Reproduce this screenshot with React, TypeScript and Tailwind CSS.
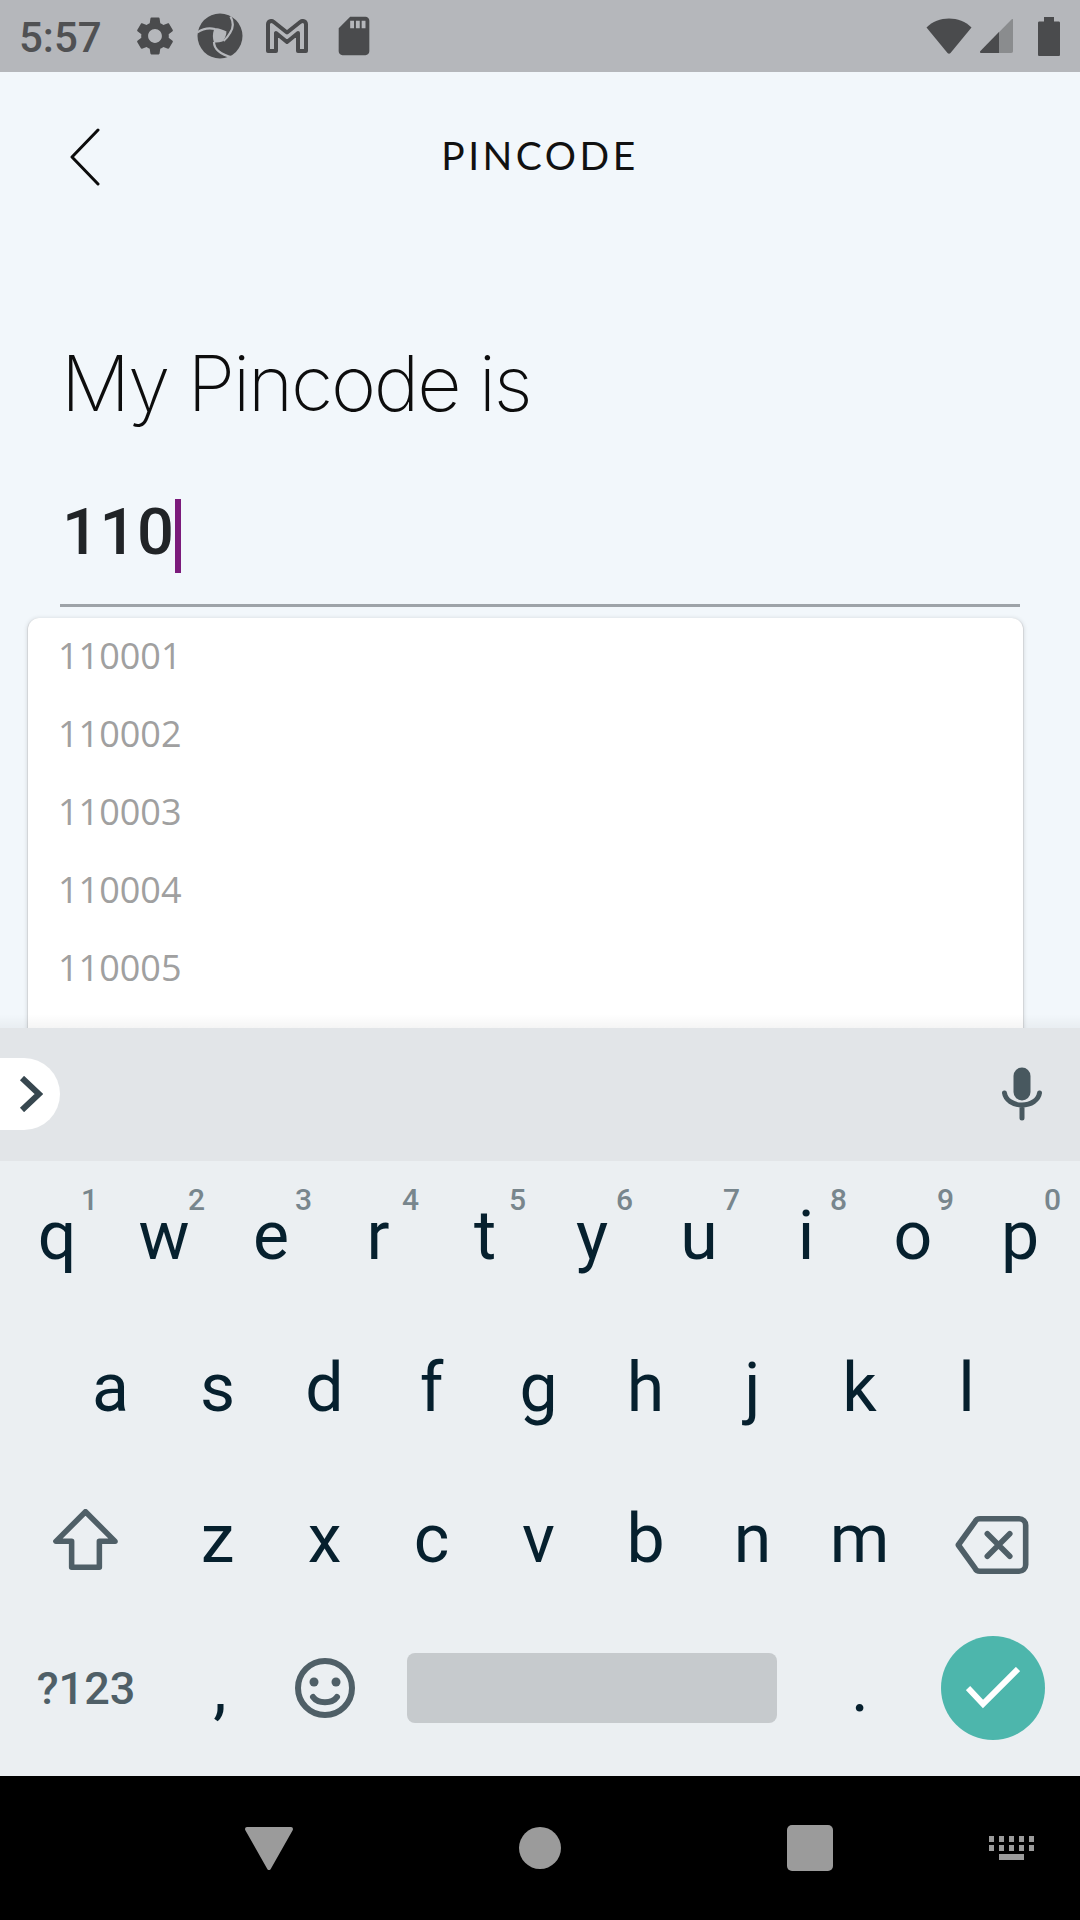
import React from 'react';

const rowOne = [
  ['q', '1'],
  ['w', '2'],
  ['e', '3'],
  ['r', '4'],
  ['t', '5'],
  ['y', '6'],
  ['u', '7'],
  ['i', '8'],
  ['o', '9'],
  ['p', '0'],
];
const rowTwo = ['a', 's', 'd', 'f', 'g', 'h', 'j', 'k', 'l'];
const rowThree = ['z', 'x', 'c', 'v', 'b', 'n', 'm'];
const suggestions = ['110001', '110002', '110003', '110004', '110005'];

const Key: React.FC<{ label: string; hint?: string }> = ({ label, hint }) => (
  <div className="relative flex h-full w-[107px] items-center justify-center text-[68px] leading-none text-[#06202e]">
    <span className="relative left-[-1.5px] top-[-2px]">{label}</span>
    {hint && (
      <span className="absolute right-[14px] top-[23px] text-[30px] font-medium leading-none text-[#78868d]">{hint}</span>
    )}
  </div>
);

const StatusBar = () => (
  <div className="flex h-[72px] items-center bg-[#b5b7bb] pl-[19px] pr-[20px] text-[#4a4b4d]">
    <span className="w-[113px] pt-[4px] font-['Roboto'] text-[42px] font-medium leading-none text-[#505153]">5:57</span>
    <div className="flex items-center">
      <svg viewBox="0 0 24 24" className="h-[46px] w-[46px]" fill="currentColor">
        <path d="M19.14 12.94c.04-.3.06-.61.06-.94 0-.32-.02-.64-.07-.94l2.03-1.58c.18-.14.23-.41.12-.61l-1.92-3.32c-.12-.22-.37-.29-.59-.22l-2.39.96c-.5-.38-1.03-.7-1.62-.94l-.36-2.54c-.04-.24-.24-.41-.48-.41h-3.84c-.24 0-.43.17-.47.41l-.36 2.54c-.59.24-1.13.57-1.62.94l-2.39-.96c-.22-.08-.47 0-.59.22L2.74 8.87c-.12.21-.08.47.12.61l2.03 1.58c-.05.3-.09.63-.09.94s.02.64.07.94l-2.03 1.58c-.18.14-.23.41-.12.61l1.92 3.32c.12.22.37.29.59.22l2.39-.96c.5.38 1.03.7 1.62.94l.36 2.54c.05.24.24.41.48.41h3.84c.24 0 .44-.17.47-.41l.36-2.54c.59-.24 1.13-.56 1.62-.94l2.39.96c.22.08.47 0 .59-.22l1.92-3.32c.12-.22.07-.47-.12-.61l-2.01-1.58zM12 15.6c-1.98 0-3.6-1.62-3.6-3.6s1.62-3.6 3.6-3.6 3.6 1.62 3.6 3.6-1.62 3.6-3.6 3.6z" />
      </svg>
      <svg viewBox="0 0 46 46" className="ml-[19px] h-[46px] w-[46px]">
        <circle cx="23" cy="23" r="22.5" fill="currentColor" />
        <path d="M0 19.500C6 15.500 12 14.500 18 16C22 16.500 26 17.500 29 19.500M33.500 3.500C36.500 9 36.500 15 33 20C31 23.500 29 26 26.500 28M17 29C17 35 22 41 35.500 44.500" fill="none" stroke="#b5b7bb" strokeWidth="2.200" />
        <path d="M17 16.500C21 16.500 26 17.500 29.500 19.500C29 23 27.500 26 25.500 28.500C22.500 29.500 20 29.800 17 29.500C15.500 25 15.500 21 17 16.500Z" fill="#b5b7bb" />
      </svg>
      <svg viewBox="0 0 42 34" className="ml-[23px] h-[34px] w-[42px]" fill="none" stroke="currentColor" strokeWidth="4" strokeLinejoin="round">
        <path d="M2 5.5C2 2.500 5 1 7.500 2.800L21 13.500L34.500 2.800C37 1 40 2.500 40 5.500V32H32V14L21 23L10 14V32H2Z" />
      </svg>
      <svg viewBox="0 0 24 24" className="ml-[23px] h-[46px] w-[46px]" fill="currentColor">
        <path d="M18 2h-8L4.020 8 4 20c0 1.100.9 2 2 2h12c1.100 0 2-.9 2-2V4c0-1.100-.9-2-2-2zm-6 6h-2V4h2v4zm3 0h-2V4h2v4zm3 0h-2V4h2v4z" />
      </svg>
    </div>
    <div className="ml-auto flex items-center">
      <svg viewBox="0 0 46 36" className="h-[36px] w-[46px]" fill="currentColor">
        <path d="M0.500 9.500C12 -2.500 34 -2.500 45.500 9.500L24.500 35C23.600 36 22.400 36 21.500 35Z" />
      </svg>
      <svg viewBox="0 0 34 34" className="ml-[8px] h-[34px] w-[34px]">
        <path d="M33 0.500V32C33 33 32.500 34 31 34H1C0 34 -0.300 33 0.500 32L31 1C32 0 33 -0.500 33 0.500Z" fill="#8a8c8e" />
        <path d="M19 13V34H1C0 34 -0.300 33 0.500 32Z" fill="currentColor" />
      </svg>
      <svg viewBox="0 0 22 39" className="ml-[24px] h-[39px] w-[22px]" fill="currentColor">
        <path d="M6 0H16V4.500H20.500C21.500 4.500 22 5 22 6V37.500C22 38.500 21.500 39 20.500 39H1.500C0.500 39 0 38.500 0 37.500V6C0 5 0.500 4.500 1.500 4.500H6Z" />
      </svg>
    </div>
  </div>
);

const PincodeForm = () => (
  <div className="relative h-[956px] overflow-hidden bg-[#f2f7fb]">
    <div className="relative flex h-[166px] items-center justify-center">
      <svg viewBox="0 0 30 58" className="absolute left-[70px] top-[56px] h-[58px] w-[30px]" fill="none" stroke="#0c0c0c" strokeWidth="3" strokeLinecap="round" strokeLinejoin="round">
        <path d="M28 2L2 29L28 56" />
      </svg>
      <span className="font-['Lato'] text-[39px] leading-none tracking-[3.5px] text-[#111]">PINCODE</span>
    </div>
    <h1 className="mt-[99px] pl-[61px] font-['Inter'] text-[77px] font-extralight leading-[92px] tracking-[-2.2px] text-[#0d0d0d]">My Pincode is</h1>
    <div className="ml-[60px] mr-[60px] mt-[66px] h-[112px] border-b-[3px] border-[#9ea3a8]">
      <div className="flex h-[74px] items-center pl-[2px]">
        <span className="font-['Roboto'] text-[65px] font-medium leading-none tracking-[0.5px] text-[#212427]">110</span>
        <span className="ml-[1px] mt-[7px] h-[74px] w-[6px] bg-[#7b1b7b]"></span>
      </div>
    </div>
    <div className="ml-[27px] mr-[56px] mt-[11px] h-[600px] rounded-t-[12px] border-x border-[#d3d6d9] bg-white pl-[30px] shadow-[0_0_4px_rgba(0,0,0,0.12)]">
      {suggestions.map((code) => (
        <div key={code} className="flex h-[78px] items-center pb-[2px] font-['Open_Sans'] text-[36px] leading-none text-[#a0a0a0]">
          {code}
        </div>
      ))}
    </div>
    <div className="absolute bottom-0 left-0 right-0 h-[14px] bg-gradient-to-b from-transparent to-[#0000000a]"></div>
  </div>
);

const Keyboard = () => (
  <div className="font-['Roboto']">
    <div className="flex h-[133px] items-center justify-between bg-[#e2e5e8] pb-[1px] pr-[38px]">
      <div className="flex h-[72px] w-[60px] items-center rounded-r-[36px] bg-white pl-[19px]">
        <svg viewBox="0 0 24 36" className="h-[36px] w-[24px]" fill="none" stroke="#37474f" strokeWidth="6">
          <path d="M3 2L20 18L3 34" />
        </svg>
      </div>
      <svg viewBox="0 0 40 54" className="h-[54px] w-[40px]" fill="none">
        <rect x="11.500" y="0.500" width="17" height="33" rx="8.500" fill="#48585f" />
        <path d="M2.500 26C3.500 33 11 38 20 38C29 38 36.500 33 37.500 26M20 38V51" stroke="#48585f" strokeWidth="5" strokeLinecap="round" />
      </svg>
    </div>
    <div className="h-[615px] bg-[#ebeff2] pt-[1px]">
      <div className="flex h-[152px] justify-center">
        {rowOne.map(([label, hint]) => (
          <Key key={label} label={label} hint={hint} />
        ))}
      </div>
      <div className="flex h-[152px] justify-center">
        {rowTwo.map((label) => (
          <Key key={label} label={label} />
        ))}
      </div>
      <div className="flex h-[150px] items-stretch justify-center">
        <div className="flex w-[165.5px] items-center justify-center pb-[4px] pl-[6px]">
          <svg viewBox="0 0 70 66" className="h-[61px] w-[65px]" fill="none" stroke="#4f5f67" strokeWidth="6" strokeLinejoin="round">
            <path d="M35 3L3 35H20V63H50V35H67Z" />
          </svg>
        </div>
        {rowThree.map((label) => (
          <Key key={label} label={label} />
        ))}
        <div className="flex w-[165.5px] items-center justify-center pr-[10px] pt-[7px]">
          <svg viewBox="0 0 78 62" className="h-[58px] w-[74px]" fill="none" stroke="#4f5f67" strokeWidth="6" strokeLinecap="round" strokeLinejoin="round">
            <path d="M3 31L21 6C22 4 24 3 26 3H68C72 3 75 6 75 10V52C75 56 72 59 68 59H26C24 59 22 58 21 56Z" />
            <path d="M34 19L58 43M58 19L34 43" />
          </svg>
        </div>
      </div>
      <div className="flex h-[144px] items-center">
        <div className="flex w-[172px] justify-center text-[45px] font-medium leading-none text-[#4f5f67]">?123</div>
        <div className="flex w-[96px] justify-center text-[68px] leading-none text-[#06202e]">,</div>
        <div className="ml-[3px] flex w-[108px] justify-center">
          <svg viewBox="0 0 60 60" className="h-[60px] w-[60px]" fill="none" stroke="#4f5f67">
            <circle cx="30" cy="30" r="27" strokeWidth="6" />
            <circle cx="19" cy="24" r="4.500" fill="#4f5f67" stroke="none" />
            <circle cx="41" cy="24" r="4.500" fill="#4f5f67" stroke="none" />
            <path d="M18 39C23 46 37 46 42 39" strokeWidth="6" strokeLinecap="round" />
          </svg>
        </div>
        <div className="ml-[28px] h-[70px] w-[370px] rounded-[8px] bg-[#c6cacd]"></div>
        <div className="ml-[29px] flex w-[108px] justify-center text-[68px] leading-none text-[#06202e]">.</div>
        <div className="ml-[27px] flex h-[104px] w-[104px] items-center justify-center rounded-full bg-[#4db6ac]">
          <svg viewBox="0 0 54 42" className="h-[42px] w-[54px]" fill="none" stroke="#fff" strokeWidth="6">
            <path d="M2 21L17 37L52 2" />
          </svg>
        </div>
      </div>
    </div>
  </div>
);

const NavBar = () => (
  <div className="flex h-[144px] items-center bg-black pl-[245px]">
    <svg viewBox="0 0 48 43" className="h-[43px] w-[48px]" fill="#9b9b9b">
      <path d="M2 0H46C47.500 0 48.300 1.500 47.800 3L26 41.500C25 43.500 23 43.500 22 41.500L0.200 3C-0.300 1.500 0.500 0 2 0Z" />
    </svg>
    <div className="ml-[226px] h-[42px] w-[42px] rounded-full bg-[#9b9b9b]"></div>
    <div className="ml-[226px] h-[46px] w-[46px] rounded-[5px] bg-[#9b9b9b]"></div>
    <svg viewBox="0 0 46 24" className="ml-[156px] h-[24px] w-[46px]" fill="#9b9b9b">
      {[0, 10, 20, 30, 40].map((x) => (
        <React.Fragment key={x}>
          <rect x={x} y="0" width="5" height="6" />
          <rect x={x} y="9" width="5" height="6" />
        </React.Fragment>
      ))}
      <rect x="10" y="18" width="25" height="6" />
    </svg>
  </div>
);

export default function App() {
  return (
    <div className="h-[1920px] w-[1080px] overflow-hidden bg-white">
      <StatusBar />
      <PincodeForm />
      <Keyboard />
      <NavBar />
    </div>
  );
}
